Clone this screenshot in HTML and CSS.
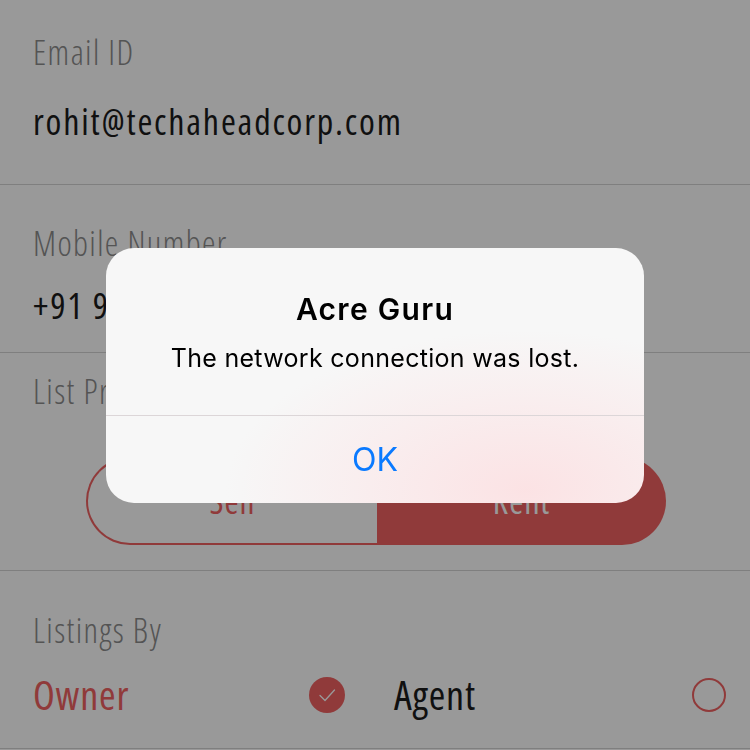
FILE: index.html
```html
<!DOCTYPE html>
<html lang="en">
<head>
<meta charset="utf-8">
<title>Profile</title>
<link rel="stylesheet" href="styles.css">
</head>
<body>
<main class="screen">
  <section class="field field-email">
    <div class="label">Email ID</div>
    <div class="value">rohit@techaheadcorp.com</div>
  </section>
  <section class="field field-mobile">
    <div class="label">Mobile Number</div>
    <div class="value">+91 9876543210</div>
  </section>
  <section class="field field-list">
    <div class="label">List Property For</div>
    <div class="segmented">
      <div class="seg seg-sell">Sell</div>
      <div class="seg seg-rent">Rent</div>
    </div>
  </section>
  <section class="field field-listings">
    <div class="label">Listings By</div>
    <div class="options">
      <div class="option">
        <span class="opt-label selected">Owner</span>
        <span class="radio checked">
          <svg viewBox="0 0 36 36" width="36" height="36"><path d="M11 18.5 L16 23.5 L25.5 13" fill="none" stroke="#ffffff" stroke-width="1.3" stroke-linecap="round" stroke-linejoin="round"/></svg>
        </span>
      </div>
      <div class="option">
        <span class="opt-label">Agent</span>
        <span class="radio"></span>
      </div>
    </div>
  </section>
</main>
<div class="dim">
  <div class="alert">
    <div class="alert-body">
      <div class="alert-title">Acre Guru</div>
      <div class="alert-message">The network connection was lost.</div>
    </div>
    <div class="alert-action">OK</div>
  </div>
</div>
</body>
</html>
```
FILE: styles.css
```css
html, body {
  margin: 0;
  padding: 0;
  background: #ffffff;
}
body {
  width: 750px;
  height: 750px;
  overflow: hidden;
  font-family: "Open Sans", "DejaVu Sans", sans-serif;
  font-stretch: 75%;
  font-weight: 400;
}
.screen {
  display: flex;
  flex-direction: column;
}
.field {
  border-bottom: 1px solid #d4d4d4;
  padding: 0 33px;
}
.label {
  font-size: 34px;
  line-height: 40px;
  font-weight: 300;
  letter-spacing: 1.4px;
  color: #8c8c8c;
}
.value {
  font-size: 36px;
  line-height: 40px;
  letter-spacing: 1.8px;
  color: #1c1c1c;
}
.field-email {
  height: 185px;
  box-sizing: border-box;
  padding-top: 32px;
}
.field-email .value {
  margin-top: 30px;
}
.field-mobile {
  height: 168px;
  box-sizing: border-box;
  padding-top: 38px;
}
.field-mobile .value {
  margin-top: 23px;
}
.field-list {
  height: 218px;
  box-sizing: border-box;
  padding-top: 18px;
}
.segmented {
  display: flex;
  margin: 46px 51px 0 53px;
  height: 88px;
}
.seg {
  flex: 1;
  display: flex;
  align-items: center;
  justify-content: center;
  font-size: 34px;
  letter-spacing: 1px;
  box-sizing: border-box;
}
.seg-sell {
  border: 2px solid #f06262;
  border-right: none;
  border-radius: 44px 0 0 44px;
  color: #f06262;
}
.seg-rent {
  background: #f06262;
  border-radius: 0 44px 44px 0;
  color: #ffffff;
}
.field-listings {
  height: 178px;
  box-sizing: border-box;
  padding-top: 39px;
  padding-right: 24px;
}
.options {
  display: grid;
  grid-template-columns: 312px 1fr;
  column-gap: 49px;
  margin-top: 20px;
}
.option {
  display: flex;
  align-items: center;
  justify-content: space-between;
  height: 50px;
}
.opt-label {
  font-size: 40px;
  line-height: 50px;
  letter-spacing: 0.8px;
  color: #1c1c1c;
}
.opt-label.selected {
  color: #f06262;
}
.radio {
  width: 34px;
  height: 34px;
  border-radius: 50%;
  border: 2px solid #f06262;
  box-sizing: border-box;
  display: flex;
  align-items: center;
  justify-content: center;
}
.radio.checked {
  width: 36px;
  height: 36px;
  border: none;
  background: #f06262;
}
.radio svg {
  display: block;
}
.dim {
  position: fixed;
  inset: 0;
  background: rgba(0, 0, 0, 0.4);
  display: flex;
  align-items: center;
  justify-content: center;
}
.alert {
  width: 538px;
  height: 255px;
  border-radius: 28px;
  background:
    radial-gradient(ellipse 300px 160px at 78% 95%, rgba(252, 224, 226, 0.9), rgba(252, 224, 226, 0) 100%),
    #f7f7f7;
  display: flex;
  flex-direction: column;
  font-family: "Inter", "Roboto", sans-serif;
  font-stretch: normal;
  overflow: hidden;
}
.alert-body {
  height: 168px;
  box-sizing: border-box;
  padding-top: 43px;
  border-bottom: 1px solid #dcd6d8;
  text-align: center;
}
.alert-title {
  font-size: 30px;
  line-height: 36px;
  font-weight: 600;
  letter-spacing: 1.3px;
  color: #000000;
}
.alert-message {
  margin-top: 15px;
  font-size: 25px;
  line-height: 32px;
  font-weight: 400;
  letter-spacing: 0.3px;
  color: #000000;
}
.alert-action {
  flex: 1;
  display: flex;
  align-items: center;
  justify-content: center;
  font-size: 32px;
  font-weight: 400;
  color: #0a7aff;
}
```
